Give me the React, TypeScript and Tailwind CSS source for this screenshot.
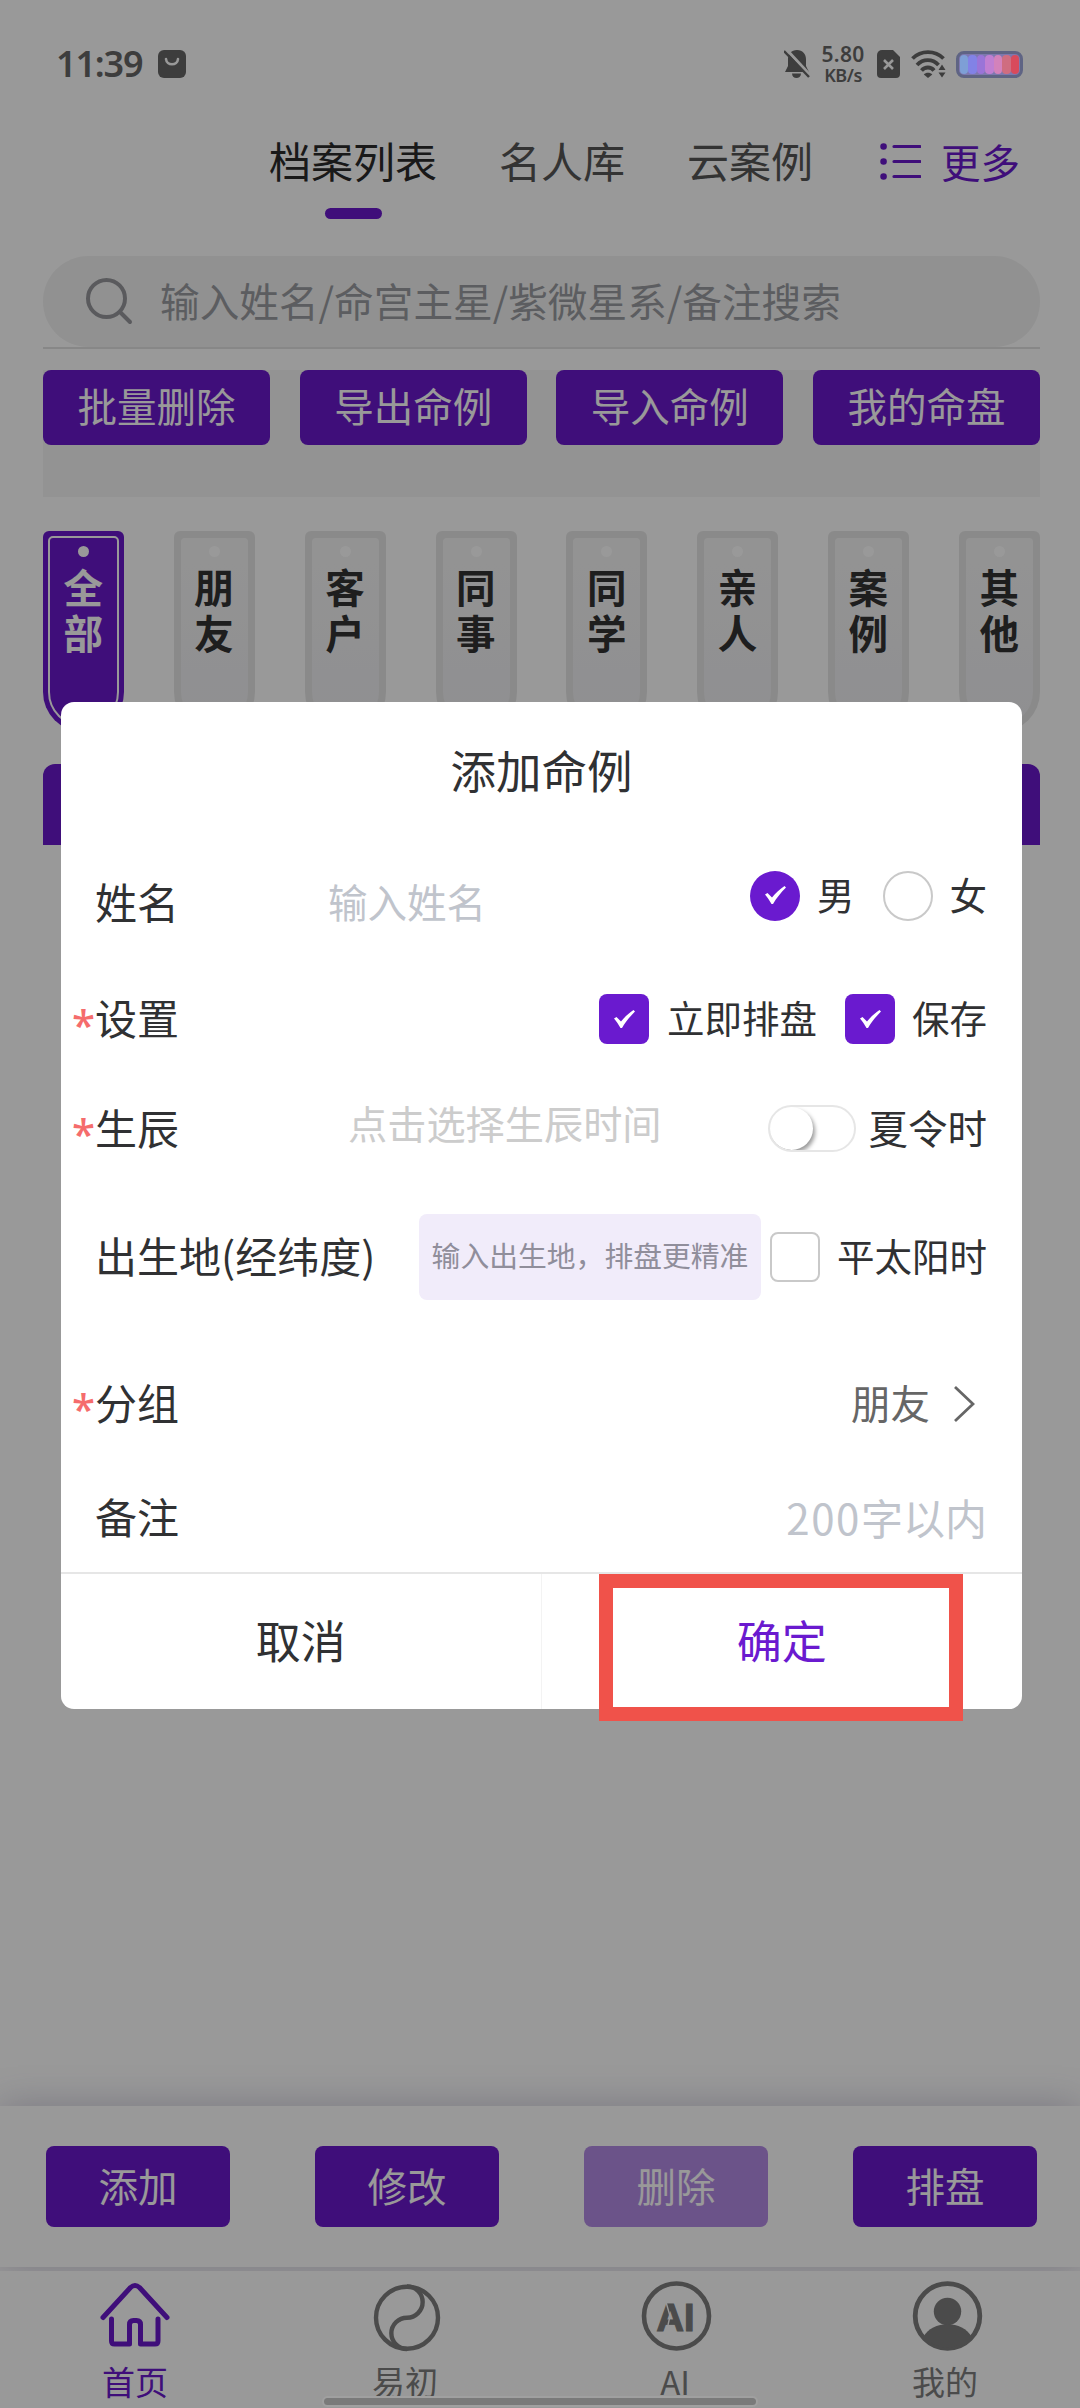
import React, { useState } from "react";

const tools = ["批量删除", "导出命例", "导入命例", "我的命盘"];
const groups = ["全部", "朋友", "客户", "同事", "同学", "亲人", "案例", "其他"];
const batteryCells = ["#7e9fd6", "#8282e6", "#9a74d8", "#c07fd2", "#d382bb", "#cf6d80", "#d84a5c"];

// sits above the mask, so its colours are not dimmed
const StatusBar: React.FC = () => (
  <div className="relative z-10 flex h-[128px] shrink-0 items-center pl-[56px] pr-[57px] text-[#3d3d3d]">
    <span className="w-[88px] text-[36px] leading-none font-semibold tracking-[-1.2px] font-['Noto_Sans',sans-serif]">11:39</span>
    <svg className="ml-[14px]" width="28" height="28" viewBox="0 0 28 28">
      <rect width="28" height="28" rx="6" fill="#3d3d3d" />
      <path d="M8 9c.5 7 11.500 7 12 0" fill="none" stroke="#999" strokeWidth="2.600" strokeLinecap="round" />
    </svg>
    <div className="ml-auto flex items-center">
      <svg width="26" height="30" viewBox="0 0 26 30">
        <path d="M13 1c5.500 0 9 4 9 9v7l3 6H1l3-6v-7c0-5 3.500-9 9-9z" fill="#3d3d3d" />
        <path d="M8 24.500h9c0 6-9 6-9 0z" fill="#3d3d3d" />
        <path d="M2 0l25 27" stroke="#999" strokeWidth="3" />
        <path d="M0 2l25 26" stroke="#3d3d3d" strokeWidth="2.400" />
      </svg>
      <div className="ml-[10px] flex w-[46px] flex-col items-center font-['Noto_Sans',sans-serif]">
        <span className="text-[21px] leading-[21px] font-semibold tracking-[0.3px]">5.80</span>
        <span className="text-[18px] leading-[20px] font-semibold tracking-[-0.5px]">KB/s</span>
      </div>
      <svg className="ml-[11px]" width="23" height="28" viewBox="0 0 23 28">
        <path d="M5 0h11l7 7v17a4 4 0 0 1-4 4H4a4 4 0 0 1-4-4V5a5 5 0 0 1 5-5z" fill="#3d3d3d" />
        <path d="M7 10l9 9M16 10l-9 9" stroke="#999" strokeWidth="2.600" />
      </svg>
      <svg className="ml-[11px]" width="35" height="28" viewBox="0 0 35 28">
        <g fill="none" stroke="#3d3d3d" strokeWidth="3.800">
          <path d="M1.500 8.500c8.500-8.500 22.500-8.500 31 0" />
          <path d="M6 15c6-6.500 15.500-6.500 21.500 0" />
          <path d="M10.500 20.500c3.500-4 9.500-4 12.500 0" />
        </g>
        <path d="M12.800 24.500c2-2.300 6.500-2.300 8.500 0L17 28z" fill="#3d3d3d" />
        <path d="M27.500 20l3.500-5.500 3.500 5.500zM27.500 22.500l3.500 5 3.500-5z" fill="#3d3d3d" />
      </svg>
      <div className="ml-[10px] flex h-[27px] w-[67px] overflow-hidden rounded-[8px] border-[3px] border-[#5f6484] bg-[#7d78ae] p-[1px]">
        {batteryCells.map((c) => (
          <span key={c} className="flex-1 rounded-[4px]" style={{ backgroundColor: c }} />
        ))}
      </div>
    </div>
  </div>
);

const Tabs: React.FC = () => (
  <div className="flex h-[91px] shrink-0 items-start pl-[269px] text-[42px] leading-none text-[#555]">
    <div className="flex flex-col items-center text-[#2b2b2b]">
      <span className="flex h-[68px] items-center pb-[4px]">档案列表</span>
      <span className="mt-[12px] h-[11px] w-[57px] rounded-full bg-[#6a18cb]" />
    </div>
    <span className="ml-[62px] flex h-[68px] items-center pb-[4px]">名人库</span>
    <span className="ml-[62px] flex h-[68px] items-center pb-[4px]">云案例</span>
    <div className="ml-[66px] flex h-[68px] items-center text-[39.5px] text-[#6a18cb]">
      <svg width="42" height="38" viewBox="0 0 42 38" stroke="currentColor" strokeWidth="3.200" strokeLinecap="round">
        <path d="M15 3.500h26M15 18.500h26M15 33.500h26" />
        <path d="M4.500 3.500h.1M4.500 18.500h.1M4.500 33.500h.1" strokeWidth="6.500" />
      </svg>
      <span className="ml-[20px] pb-[3px]">更多</span>
    </div>
  </div>
);

const GroupTag: React.FC<{ name: string; active: boolean }> = ({ name, active }) => (
  <div
    className={
      active
        ? "h-[201px] w-[81px] rounded-t-[6px] rounded-b-[40px] bg-[#6a18cb] p-[5px] text-white"
        : "h-[201px] w-[81px] rounded-t-[6px] rounded-b-[40px] bg-[#e7e7e7] p-[7px] text-[#333]"
    }
  >
    <div
      className={
        active
          ? "flex h-full flex-col items-center rounded-t-[5px] rounded-b-[35px] border-2 border-white pt-[8px]"
          : "flex h-full flex-col items-center rounded-t-[4px] rounded-b-[33px] bg-linear-to-b from-[#f6f6f6] to-[#efeff2] pt-[8px]"
      }
    >
      <span className="size-[11px] shrink-0 rounded-full bg-white" />
      <span className="mt-[6px] w-[40px] text-[39.5px] leading-[46px] font-bold">{name}</span>
    </div>
  </div>
);

const CheckMark: React.FC = () => (
  <svg width="21" height="18" viewBox="0 0 21 18">
    <path d="M0 8.500l2.500-1.500 4.500 4.500C10.500 7 15 3 19.500 0L21 1.500C16 6.500 11.500 12 8 18H6.500C4.500 14.500 2.500 11.500 0 8.500z" fill="#fff" />
  </svg>
);

const Box: React.FC<{ checked: boolean; round?: boolean; onClick: () => void }> = ({ checked, round, onClick }) => (
  <button
    onClick={onClick}
    className={`flex h-[50px] w-[50px] shrink-0 items-center justify-center ${round ? "rounded-full pb-[2px]" : "rounded-[8px]"} ${
      checked ? "bg-[#6a1acf]" : "border-2 border-[#c9c9c9] bg-white"
    }`}
  >
    {checked && <CheckMark />}
  </button>
);

const Label: React.FC<{ text: string; required?: boolean }> = ({ text, required }) => (
  <div className="flex shrink-0 items-center pb-[4px] text-[42px] leading-none text-[#303133]">
    <span className="-ml-px w-[23px] pt-[15px] text-[42px] font-medium text-[#f56c6c] font-['Noto_Sans',sans-serif]">
      {required ? "*" : ""}
    </span>
    <span>{text}</span>
  </div>
);

const AddDialog: React.FC = () => {
  const [gender, setGender] = useState("男");
  const [form, setForm] = useState({ chart: true, save: true, solar: false });

  return (
    <div className="relative mt-[702px] flex h-[1007px] w-[961px] flex-col rounded-[13px] bg-white text-[37.5px] leading-none text-[#303133]">
      <h1 className="flex h-[138px] items-center justify-center pb-[3px] text-[45.5px]">添加命例</h1>

      <div className="flex h-[126px] items-center pl-[12px] pr-[35px]">
        <Label text="姓名" />
        <span className="ml-[149px] pb-[4px] text-[39.5px] text-[#c0c4cc]">输入姓名</span>
        <div className="ml-auto flex items-center pb-[15px]">
          <Box round checked={gender === "男"} onClick={() => setGender("男")} />
          <span className="ml-[17px] mr-[28px] pb-[4px]">男</span>
          <Box round checked={gender === "女"} onClick={() => setGender("女")} />
          <span className="ml-[17px] pb-[4px]">女</span>
        </div>
      </div>

      <div className="flex h-[106px] items-center pl-[12px] pr-[35px]">
        <Label text="设置" required />
        <div className="ml-auto flex items-center">
          <Box checked={form.chart} onClick={() => setForm({ ...form, chart: !form.chart })} />
          <span className="ml-[18px] mr-[28px] pb-[4px]">立即排盘</span>
          <Box checked={form.save} onClick={() => setForm({ ...form, save: !form.save })} />
          <span className="ml-[17px] pb-[4px]">保存</span>
        </div>
      </div>

      <div className="flex h-[113px] items-center pl-[12px] pr-[35px] text-[39.5px]">
        <Label text="生辰" required />
        <span className="ml-[169px] pb-[12px] text-[39.2px] text-[#ccc]">点击选择生辰时间</span>
        <div className="ml-auto flex items-center">
          <span className="h-[47px] w-[88px] overflow-hidden rounded-full border-2 border-[#e6e6e6]">
            <span className="block size-[43px] rounded-full bg-white shadow-[2px_3px_4px_rgba(0,0,0,0.4)]" />
          </span>
          <span className="ml-[13px] pb-[3px]">夏令时</span>
        </div>
      </div>

      <div className="flex h-[143px] items-center pl-[12px] pr-[35px]">
        <Label text="出生地(经纬度)" />
        <div className="ml-auto flex h-[86px] w-[342px] items-center justify-center rounded-[8px] bg-[#f1ecfa] pb-[3px] text-[28.8px] text-[#908e9b]">
          输入出生地，排盘更精准
        </div>
        <div className="ml-[9px] flex items-center">
          <Box checked={form.solar} onClick={() => setForm({ ...form, solar: !form.solar })} />
          <span className="ml-[17px] pb-[4px]">平太阳时</span>
        </div>
      </div>

      <div className="flex h-[151px] items-center pl-[12px] pr-[47px] text-[39.5px] text-[#666]">
        <Label text="分组" required />
        <span className="ml-auto pb-[3px]">朋友</span>
        <svg className="ml-[23px]" width="22" height="38" viewBox="0 0 22 38">
          <path d="M2 2l18 17L2 36" fill="none" stroke="#666" strokeWidth="2.800" />
        </svg>
      </div>

      <div className="flex h-[78px] items-center pl-[12px] pr-[35px] text-[42px]">
        <Label text="备注" />
        <span className="ml-auto pb-[3px] text-[#c0c4cc]">
          <span className="tracking-[1.6px]">200</span>字以内
        </span>
      </div>

      <div className="mt-auto grid h-[137px] grid-cols-2 border-t-2 border-[#e6e6e6] text-[45px]">
        <button className="border-r border-[#f3f3f3] pb-[5px]">取消</button>
        <button className="pb-[5px] text-[#6a1acf]">确定</button>
      </div>

      {/* highlight round the confirm button */}
      <div className="absolute left-[538px] top-[872px] h-[147px] w-[364px] border-[14px] border-[#f0524a]" />
    </div>
  );
};

const HomeIcon = () => (
  <svg width="70" height="70" viewBox="0 0 70 70" fill="none" stroke="#6a18cb" strokeWidth="5" strokeLinecap="round" strokeLinejoin="round">
    <path d="M3 36.500L30.500 6.500q4.500-4 9 0L67 36.500" />
    <path d="M11.500 38v22q0 3 3 3H29.500V43.500q0-4 4-4h3q4 0 4 4V63H55q3 0 3-3V38" />
  </svg>
);

const YinYangIcon = () => (
  <svg width="70" height="70" viewBox="0 0 70 70" className="overflow-visible" fill="none" stroke="#7d7d7d" strokeWidth="4.400">
    <circle cx="37" cy="36.700" r="31" />
    <path d="M37 5.400a15.600 15.600 0 0 1 0 31.300a15.600 15.600 0 0 0 0 31.300" />
  </svg>
);

const AiIcon = () => (
  <svg width="70" height="70" viewBox="0 0 70 70" className="overflow-visible">
    <circle cx="36.500" cy="35" r="32.500" fill="none" stroke="#7d7d7d" strokeWidth="4.600" />
    <text x="16.500" y="49.500" fontSize="38" fontWeight="700" fill="#7d7d7d" stroke="#7d7d7d" strokeWidth="1.200" fontFamily="Liberation Sans, sans-serif">
      AI
    </text>
    <path d="M26 21l4 14-2 9" fill="none" stroke="#fff" strokeWidth="1.400" />
  </svg>
);

const UserIcon = () => (
  <svg width="70" height="70" viewBox="0 0 70 70" className="overflow-visible">
    <circle cx="37.500" cy="35" r="32.300" fill="none" stroke="#7d7d7d" strokeWidth="4.800" />
    <circle cx="37.500" cy="30.500" r="13.700" fill="#7d7d7d" />
    <path d="M13.500 56c8-17 40-17 48 0a33 33 0 0 1-48 0z" fill="#7d7d7d" />
  </svg>
);

const navItems = [
  { text: "首页", icon: <HomeIcon /> },
  { text: "易初", icon: <YinYangIcon /> },
  { text: "AI", icon: <AiIcon /> },
  { text: "我的", icon: <UserIcon /> },
];

const App: React.FC = () => {
  return (
    <div className="relative flex h-[2408px] w-[1080px] flex-col overflow-hidden bg-white font-['Noto_Sans_CJK_SC',sans-serif]">
      <StatusBar />
      <Tabs />

      <div className="ml-[43px] mr-[40px] mt-[37px] shrink-0 border-b-2 border-[#e2e2e2]">
        <div className="flex h-[91px] items-center rounded-full bg-[#f2f2f2] pl-[41px]">
          <svg width="52" height="52" viewBox="0 0 52 52" fill="none" stroke="#96979c" strokeWidth="4" strokeLinecap="round">
            <circle cx="22.500" cy="22.500" r="18.500" />
            <path d="M36 36l10 10" />
          </svg>
          <span className="ml-[24px] pb-[4px] text-[39.65px] leading-none text-[#999ba1]">输入姓名/命宫主星/紫微星系/备注搜索</span>
        </div>
      </div>

      <div className="ml-[43px] mr-[40px] mt-[21px] flex h-[127px] shrink-0 items-start justify-between bg-[#f5f5f5]">
        {tools.map((t) => (
          <button key={t} className="h-[75px] w-[227px] rounded-[8px] bg-[#6a18cb] pb-[6px] text-[39.5px] leading-none text-white">
            {t}
          </button>
        ))}
      </div>

      <div className="ml-[43px] mr-[40px] mt-[34px] flex shrink-0 justify-between">
        {groups.map((g, i) => (
          <GroupTag key={g} name={g} active={i === 0} />
        ))}
      </div>

      <div className="ml-[43px] mr-[40px] mt-[32px] h-[81px] shrink-0 rounded-t-[12px] bg-[#6a18cb]" />

      <div className="mt-auto flex h-[161px] shrink-0 items-center justify-between bg-white pl-[46px] pr-[43px] shadow-[0_0_36px_rgba(80,70,120,0.3)]">
        {["添加", "修改", "删除", "排盘"].map((t) => (
          <button
            key={t}
            className={`h-[81px] w-[184px] rounded-[8px] bg-[#6a18cb] pb-[3px] text-[39.5px] leading-none text-white ${t === "删除" ? "opacity-50" : ""}`}
          >
            {t}
          </button>
        ))}
      </div>

      <div className="relative mt-[4px] grid h-[137px] shrink-0 grid-cols-4 bg-white pt-[10px]">
        {navItems.map((n, i) => (
          <div key={n.text} className={`flex flex-col items-center text-[33px] leading-none ${i === 0 ? "text-[#6a18cb]" : "text-[#7d7d7d]"}`}>
            {n.icon}
            <span className="mt-[14px]">{n.text}</span>
          </div>
        ))}
      </div>

      <div className="absolute inset-0 flex items-start justify-center bg-black/40 pl-[3px]">
        <AddDialog />
      </div>

      <div className="absolute bottom-[1px] left-[322px] h-[11px] w-[436px] rounded-full border-2 border-[#a0a0a0] bg-[#7a7a7a]" />
    </div>
  );
};

export default App;
